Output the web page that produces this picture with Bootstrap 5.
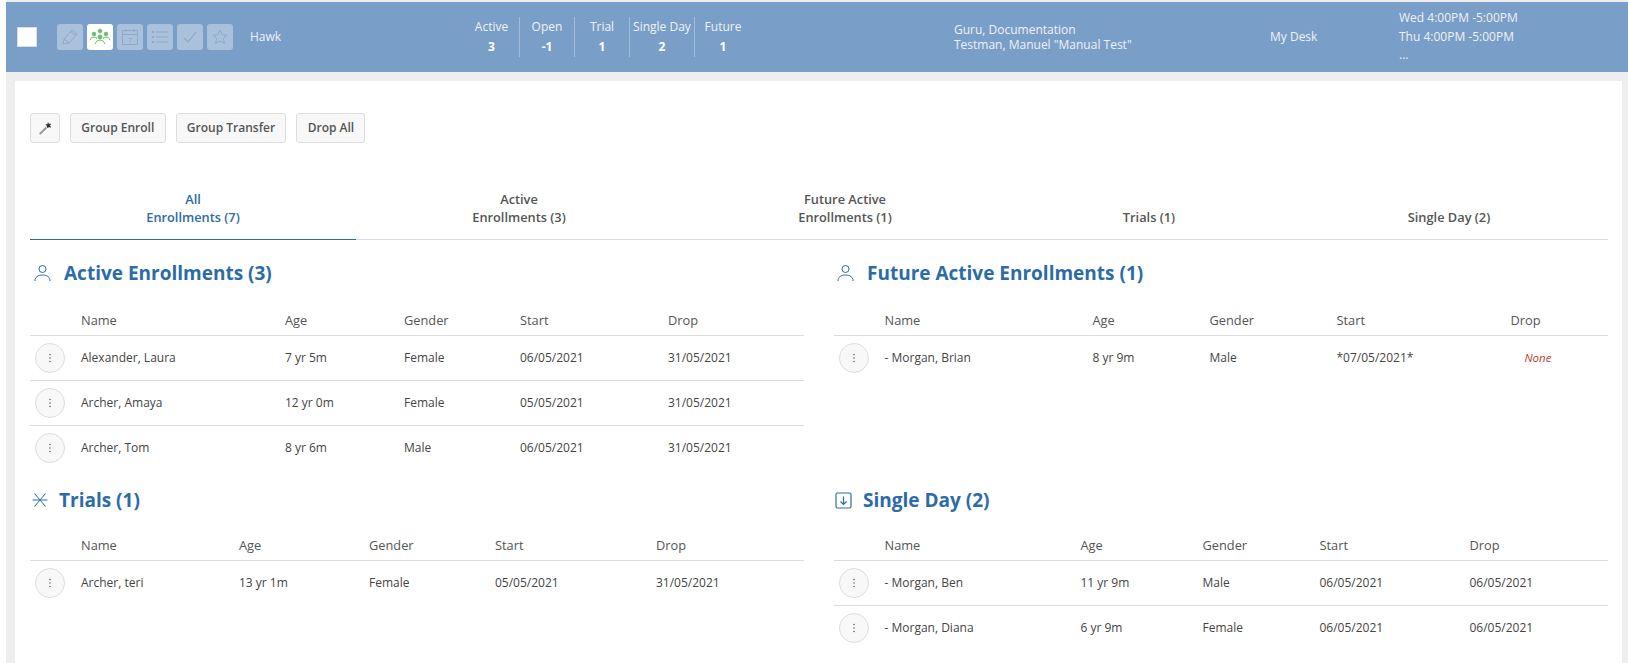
<!DOCTYPE html>
<html lang="en"><head><meta charset="utf-8"><title>Enrollments</title>
<link href="https://cdn.jsdelivr.net/npm/bootstrap@5.3.0/dist/css/bootstrap.min.css" rel="stylesheet">
<style>
html,body{height:663px;overflow:hidden}
body{background:#fff;font-family:"Open Sans",sans-serif;font-size:12px;color:#555}
.shell{margin-left:6px;height:663px;padding-top:2px;background:#eee;display:flex;flex-direction:column}
.topbar{height:70px;background:#799ec7;color:#eef2f7;flex:none;font-size:12px}
.tick-box{width:20px;height:20px;background:#fff;border:1px solid #ddd;margin-left:11px;margin-right:20px;flex:none}
.tools{gap:4px}
.tool{width:26px;height:26px;border-radius:3px;background:#a9c1dc;display:flex;align-items:center;justify-content:center;flex:none}
.tool.on{background:#fff}
.hawk{margin-left:17px;width:214px;flex:none}
.stat{height:40px;text-align:center;border-right:1px solid #a3bcd8;line-height:20px;flex:none}
.stat:last-child{border-right:0}
.stat b{display:block;font-weight:700;color:#fff}
.s1{width:56px}.s2,.s3{width:55px}.s4{width:65px}.s5{width:56px}
.names{margin-left:203px;width:316px;flex:none;line-height:15px}
.desk{width:129px;flex:none}
.sched{flex:none;line-height:18.500px}
.sheet{background:#fff;flex:1;margin:9px 6px 0 9px;padding:32px 14px 0 15px;overflow:hidden;min-height:0}
.tool-row{gap:10px}
.soft-btn{height:30px;padding:0 10.300px;font-size:12px;font-weight:600;color:#555;background:#f8f8f8;border:1px solid #ddd;border-radius:3px;display:flex;align-items:center}
.soft-btn.wand{width:30px;padding:0;justify-content:center}
.tabrow{margin-top:38px;height:59px;border-bottom:1px solid #ddd;font-weight:600;font-size:12.800px;line-height:18px}
.tabcell{display:flex;align-items:flex-end;justify-content:center;text-align:center;padding-bottom:14px;color:#555;height:59px}
.tabcell.on{color:#2b6ca8;border-bottom:1px solid #2b6ca8;padding-bottom:13px}
.t1,.t2,.t3{width:326px}.t4{width:282px}.t5{width:318px}
.two{display:grid;grid-template-columns:774px 774px;column-gap:29.500px}
.blockhead{color:#2b6ca8;font-size:19px;font-weight:700;margin:0;line-height:24px;display:flex;align-items:center;padding-left:4px}
.blockhead.tight{padding-left:2px}
.blockhead.near{padding-left:3.500px}
.blockhead.nearer{padding-left:1.500px}
.roster{width:100%;table-layout:fixed;border-collapse:collapse;font-size:12px}
.roster th{font-weight:500;height:31px;padding:2px 0 0;border-bottom:1px solid #ddd;vertical-align:middle;font-size:12.800px;color:#555}
.roster td{height:45px;padding:1px 0 0;border-bottom:1px solid #ddd;color:#444;vertical-align:middle}
.roster tr:last-child td{border-bottom:0}
.dots{width:30px;height:30px;border-radius:50%;background:#f8f8f8;border:1px solid #ddd;display:flex;align-items:center;justify-content:center;margin-left:5px}
.none-flag{color:#c0392b;font-style:italic;font-size:11.500px;padding-left:14px;display:inline-block}
.a1 col:nth-child(1),.a2 col:nth-child(1),.a3 col:nth-child(1),.a4 col:nth-child(1){width:51px}
.a1 col:nth-child(2){width:204px}.a1 col:nth-child(3){width:119px}.a1 col:nth-child(4){width:116px}.a1 col:nth-child(5){width:148px}
.a2 col:nth-child(2){width:208px}.a2 col:nth-child(3){width:117px}.a2 col:nth-child(4){width:127px}.a2 col:nth-child(5){width:174px}
.a3 col:nth-child(2){width:158px}.a3 col:nth-child(3){width:130px}.a3 col:nth-child(4){width:126px}.a3 col:nth-child(5){width:161px}
.a4 col:nth-child(2){width:196px}.a4 col:nth-child(3){width:122px}.a4 col:nth-child(4){width:117px}.a4 col:nth-child(5){width:150px}
.row-one{margin-top:21px;height:227px}
.gap-top{margin-top:19px}
.gap-low{margin-top:17px}
.hd-ico{flex:none}
.mi1,.mi2{margin-right:13px}.mi3{margin-right:11px}
</style></head><body>
<svg width="0" height="0" class="position-absolute"><defs>
<symbol id="vdots" viewBox="0 0 4 12"><circle cx="2" cy="2.500" r=".8" fill="#666"/><circle cx="2" cy="6" r=".8" fill="#666"/><circle cx="2" cy="9.500" r=".8" fill="#666"/></symbol>
<symbol id="person" viewBox="0 0 17 18"><circle cx="8.500" cy="5" r="3.500" fill="none" stroke="#2b6ca8"/><path d="M1 17c0-4 3-6 7.500-6s7.500 2 7.500 6" fill="none" stroke="#2b6ca8"/></symbol>
</defs></svg>
<div class="shell">
<header class="topbar d-flex align-items-center">
 <div class="tick-box"></div>
 <div class="d-flex tools">
  <div class="tool"><svg width="18" height="18" viewBox="0 0 18 18" fill="none" stroke="#8fa9c6"><path d="M2 16l1-5 8-9 5 4-8 9zM3 11l5 4M9.500 3.500l5 4"/></svg></div>
  <div class="tool on"><svg width="22" height="18" viewBox="0 0 22 18" fill="#6cbf6c" stroke="#6cbf6c"><circle cx="11" cy="3" r="1.800"/><circle cx="5" cy="6" r="1.800"/><circle cx="17" cy="6" r="1.800"/><circle cx="11" cy="9" r="2"/><path fill="none" d="M1 12q1-3 4-3t3 2M21 12q-1-3-4-3t-3 2M6 16q1-4 5-4t5 4"/></svg></div>
  <div class="tool"><svg width="20" height="20" viewBox="0 0 20 20" fill="none" stroke="#8fa9c6"><rect x="2.500" y="3.500" width="15" height="14"/><path d="M2.500 7.500h15M6 2v3M14 2v3"/><text x="10" y="16" font-size="8" text-anchor="middle" fill="#8fa9c6" stroke="none" font-family="Open Sans">7</text></svg></div>
  <div class="tool"><svg width="18" height="16" viewBox="0 0 18 16" fill="none" stroke="#8fa9c6"><path d="M5 3h12M5 8h12M5 13h12"/><path stroke-width="2" d="M1 3h2M1 8h2M1 13h2"/></svg></div>
  <div class="tool"><svg width="16" height="14" viewBox="0 0 16 14" fill="none" stroke="#8fa9c6" stroke-width="1.200"><path d="M2 8l4 4 8-10"/></svg></div>
  <div class="tool"><svg width="18" height="18" viewBox="0 0 18 18" fill="none" stroke="#8fa9c6"><path d="M9 2l2.100 4.700 5 .5-3.800 3.300 1.100 5L9 13l-4.400 2.500 1.100-5L1.900 7.200l5-.5z"/></svg></div>
 </div>
 <div class="hawk">Hawk</div>
 <div class="d-flex">
  <div class="stat s1">Active<b>3</b></div><div class="stat s2">Open<b>-1</b></div><div class="stat s3">Trial<b>1</b></div><div class="stat s4">Single Day<b>2</b></div><div class="stat s5">Future<b>1</b></div>
 </div>
 <div class="names">Guru, Documentation<br>Testman, Manuel "Manual Test"</div>
 <div class="desk">My Desk</div>
 <div class="sched">Wed 4:00PM -5:00PM<br>Thu 4:00PM -5:00PM<br>...</div>
</header>
<main class="sheet">
 <div class="d-flex tool-row">
  <button class="soft-btn wand" aria-label="wand"><svg width="14" height="14" viewBox="0 0 16 16"><path d="M2 15l7.500-7.500" stroke="#999" stroke-width="2.400"/><path d="M11.500 1l.8 2.200L15 3l-1.200 2 1.200 2.500-2.500-.5-2 1-.5-2.500-1.500-1.500 2.300-.6z" fill="#333"/></svg></button>
  <button class="soft-btn">Group Enroll</button><button class="soft-btn">Group Transfer</button><button class="soft-btn">Drop All</button>
 </div>
 <nav class="tabrow d-flex">
  <div class="tabcell on t1">All<br>Enrollments (7)</div>
  <div class="tabcell t2">Active<br>Enrollments (3)</div>
  <div class="tabcell t3">Future Active<br>Enrollments (1)</div>
  <div class="tabcell t4">Trials (1)</div>
  <div class="tabcell t5">Single Day (2)</div>
 </nav>
 <div class="two row-one">
  <section>
   <h2 class="blockhead"><svg class="hd-ico mi1" width="17" height="18"><use href="#person"/></svg>Active Enrollments (3)</h2>
   <table class="roster a1 gap-top"><colgroup><col><col><col><col><col><col></colgroup>
    <thead><tr><th></th><th>Name</th><th>Age</th><th>Gender</th><th>Start</th><th>Drop</th></tr></thead>
    <tbody>
     <tr><td><div class="dots"><svg width="4" height="12"><use href="#vdots"/></svg></div></td><td>Alexander, Laura</td><td>7 yr 5m</td><td>Female</td><td>06/05/2021</td><td>31/05/2021</td></tr>
     <tr><td><div class="dots"><svg width="4" height="12"><use href="#vdots"/></svg></div></td><td>Archer, Amaya</td><td>12 yr 0m</td><td>Female</td><td>05/05/2021</td><td>31/05/2021</td></tr>
     <tr><td><div class="dots"><svg width="4" height="12"><use href="#vdots"/></svg></div></td><td>Archer, Tom</td><td>8 yr 6m</td><td>Male</td><td>06/05/2021</td><td>31/05/2021</td></tr>
    </tbody>
   </table>
  </section>
  <section>
   <h2 class="blockhead near"><svg class="hd-ico mi2" width="17" height="18"><use href="#person"/></svg>Future Active Enrollments (1)</h2>
   <table class="roster a2 gap-top"><colgroup><col><col><col><col><col><col></colgroup>
    <thead><tr><th></th><th>Name</th><th>Age</th><th>Gender</th><th>Start</th><th>Drop</th></tr></thead>
    <tbody>
     <tr><td><div class="dots"><svg width="4" height="12"><use href="#vdots"/></svg></div></td><td>- Morgan, Brian</td><td>8 yr 9m</td><td>Male</td><td>*07/05/2021*</td><td><span class="none-flag">None</span></td></tr>
    </tbody>
   </table>
  </section>
 </div>
 <div class="two">
  <section>
   <h2 class="blockhead tight"><svg class="hd-ico mi3" width="16" height="16" viewBox="0 0 16 16" fill="none" stroke="#2b6ca8"><path d="M0.500 8h15M2.500 1.500l11 13M13.500 1.500l-11 13"/></svg>Trials (1)</h2>
   <table class="roster a3 gap-low"><colgroup><col><col><col><col><col><col></colgroup>
    <thead><tr><th></th><th>Name</th><th>Age</th><th>Gender</th><th>Start</th><th>Drop</th></tr></thead>
    <tbody>
     <tr><td><div class="dots"><svg width="4" height="12"><use href="#vdots"/></svg></div></td><td>Archer, teri</td><td>13 yr 1m</td><td>Female</td><td>05/05/2021</td><td>31/05/2021</td></tr>
    </tbody>
   </table>
  </section>
  <section>
   <h2 class="blockhead nearer"><svg class="hd-ico mi3" width="17" height="17" viewBox="0 0 17 17" fill="none" stroke="#2b6ca8" stroke-width="1.200"><rect x="1" y="1" width="15" height="15" rx="1.500"/><path d="M8.500 4.500v8M5.500 9.500l3 3 3-3"/></svg>Single Day (2)</h2>
   <table class="roster a4 gap-low"><colgroup><col><col><col><col><col><col></colgroup>
    <thead><tr><th></th><th>Name</th><th>Age</th><th>Gender</th><th>Start</th><th>Drop</th></tr></thead>
    <tbody>
     <tr><td><div class="dots"><svg width="4" height="12"><use href="#vdots"/></svg></div></td><td>- Morgan, Ben</td><td>11 yr 9m</td><td>Male</td><td>06/05/2021</td><td>06/05/2021</td></tr>
     <tr><td><div class="dots"><svg width="4" height="12"><use href="#vdots"/></svg></div></td><td>- Morgan, Diana</td><td>6 yr 9m</td><td>Female</td><td>06/05/2021</td><td>06/05/2021</td></tr>
    </tbody>
   </table>
  </section>
 </div>
</main>
</div>
</body></html>
